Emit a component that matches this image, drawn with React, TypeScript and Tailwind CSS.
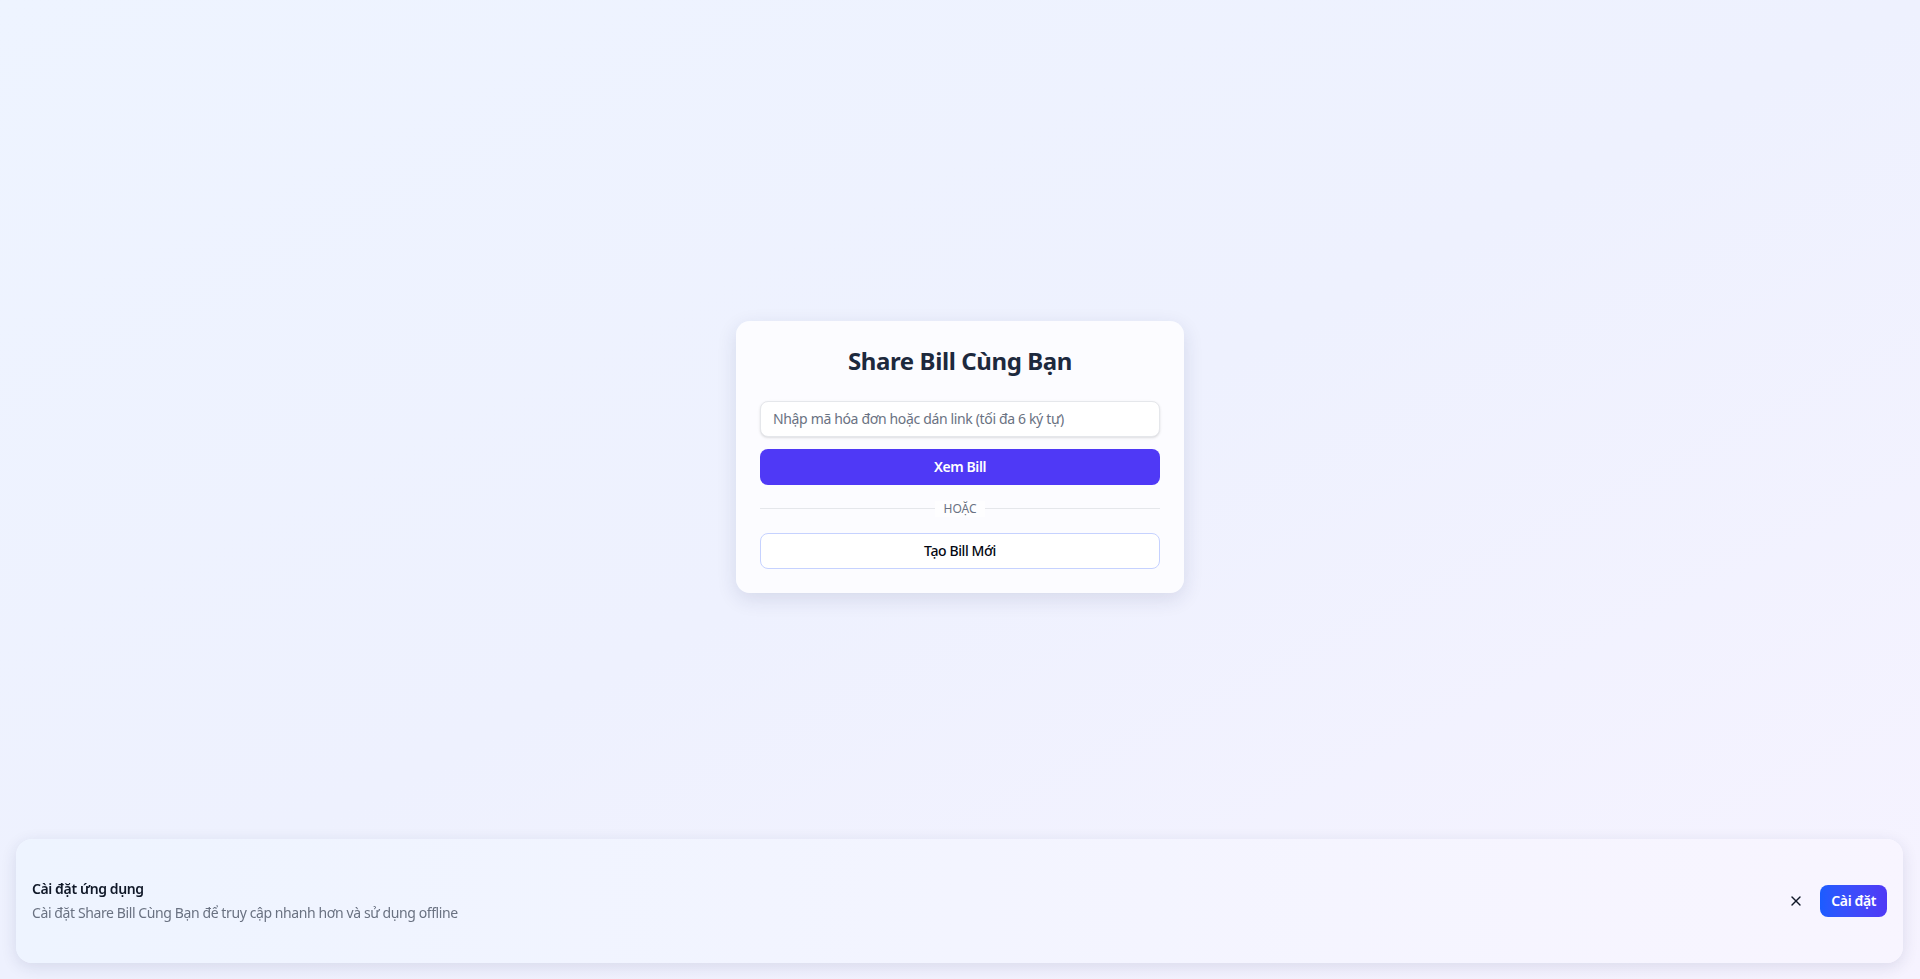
import { useState } from "react";
import { X } from "lucide-react";

// PWA INSTALL PROMPT
function InstallBanner({ onClose }: { onClose: () => void }) {
  return (
    <div className="fixed bottom-4 left-4 right-[17px] flex h-[124px] items-center justify-between rounded-2xl bg-linear-to-r from-[#eef4ff] to-[#f8f5ff] px-4 shadow-[0_4px_16px_rgba(30,41,90,0.12)]">
      <div className="flex flex-col gap-1">
        <h3 className="text-sm leading-5 font-semibold text-gray-900">Cài đặt ứng dụng</h3>
        <p className="text-sm leading-5 text-gray-500">
          Cài đặt Share Bill Cùng Bạn để truy cập nhanh hơn và sử dụng offline
        </p>
      </div>
      <div className="flex items-center gap-2">
        <button
          onClick={onClose}
          className="flex h-8 w-8 items-center justify-center rounded-md text-gray-900"
        >
          <X size={16} strokeWidth={2} />
        </button>
        <button className="h-8 rounded-lg bg-linear-to-r from-[#1a5cff] to-[#4f39f6] px-[11px] text-sm font-semibold text-white">
          Cài đặt
        </button>
      </div>
    </div>
  );
}

export default function App() {
  const [code, setCode] = useState("");
  const [showBanner, setShowBanner] = useState(true);

  return (
    <div className="flex min-h-screen items-center justify-center bg-linear-to-br from-[#eef4ff] via-[#eef1fe] to-[#f6f3ff] pb-[66px] font-['Noto_Sans',sans-serif] tracking-[-0.025em]">
      {/* MAIN CARD */}
      <div className="w-[448px] rounded-[14px] bg-white/80 p-6 shadow-[0_6px_20px_rgba(30,41,90,0.12)]">
        <h1 className="mb-6 text-center text-2xl leading-8 font-bold text-slate-800">
          Share Bill Cùng Bạn
        </h1>

        <input
          value={code}
          onChange={(e) => setCode(e.target.value)}
          placeholder="Nhập mã hóa đơn hoặc dán link (tối đa 6 ký tự)"
          className="h-9 w-full rounded-lg border border-gray-200 bg-white px-3 text-sm tracking-[-0.025em] text-gray-900 shadow-sm outline-none placeholder:text-gray-500"
        />

        <button className="mt-3 h-9 w-full rounded-lg bg-[#4f39f6] text-sm font-semibold text-white">
          Xem Bill
        </button>

        {/* DIVIDER */}
        <div className="my-4 flex items-center">
          <div className="h-px flex-1 bg-gray-200" />
          <span className="bg-white/80 px-2 text-xs leading-4 tracking-normal text-gray-500">HOẶC</span>
          <div className="h-px flex-1 bg-gray-200" />
        </div>

        <button className="h-9 w-full rounded-lg border border-indigo-200 bg-white text-sm font-medium text-gray-950">
          Tạo Bill Mới
        </button>
      </div>

      {showBanner && <InstallBanner onClose={() => setShowBanner(false)} />}
    </div>
  );
}
